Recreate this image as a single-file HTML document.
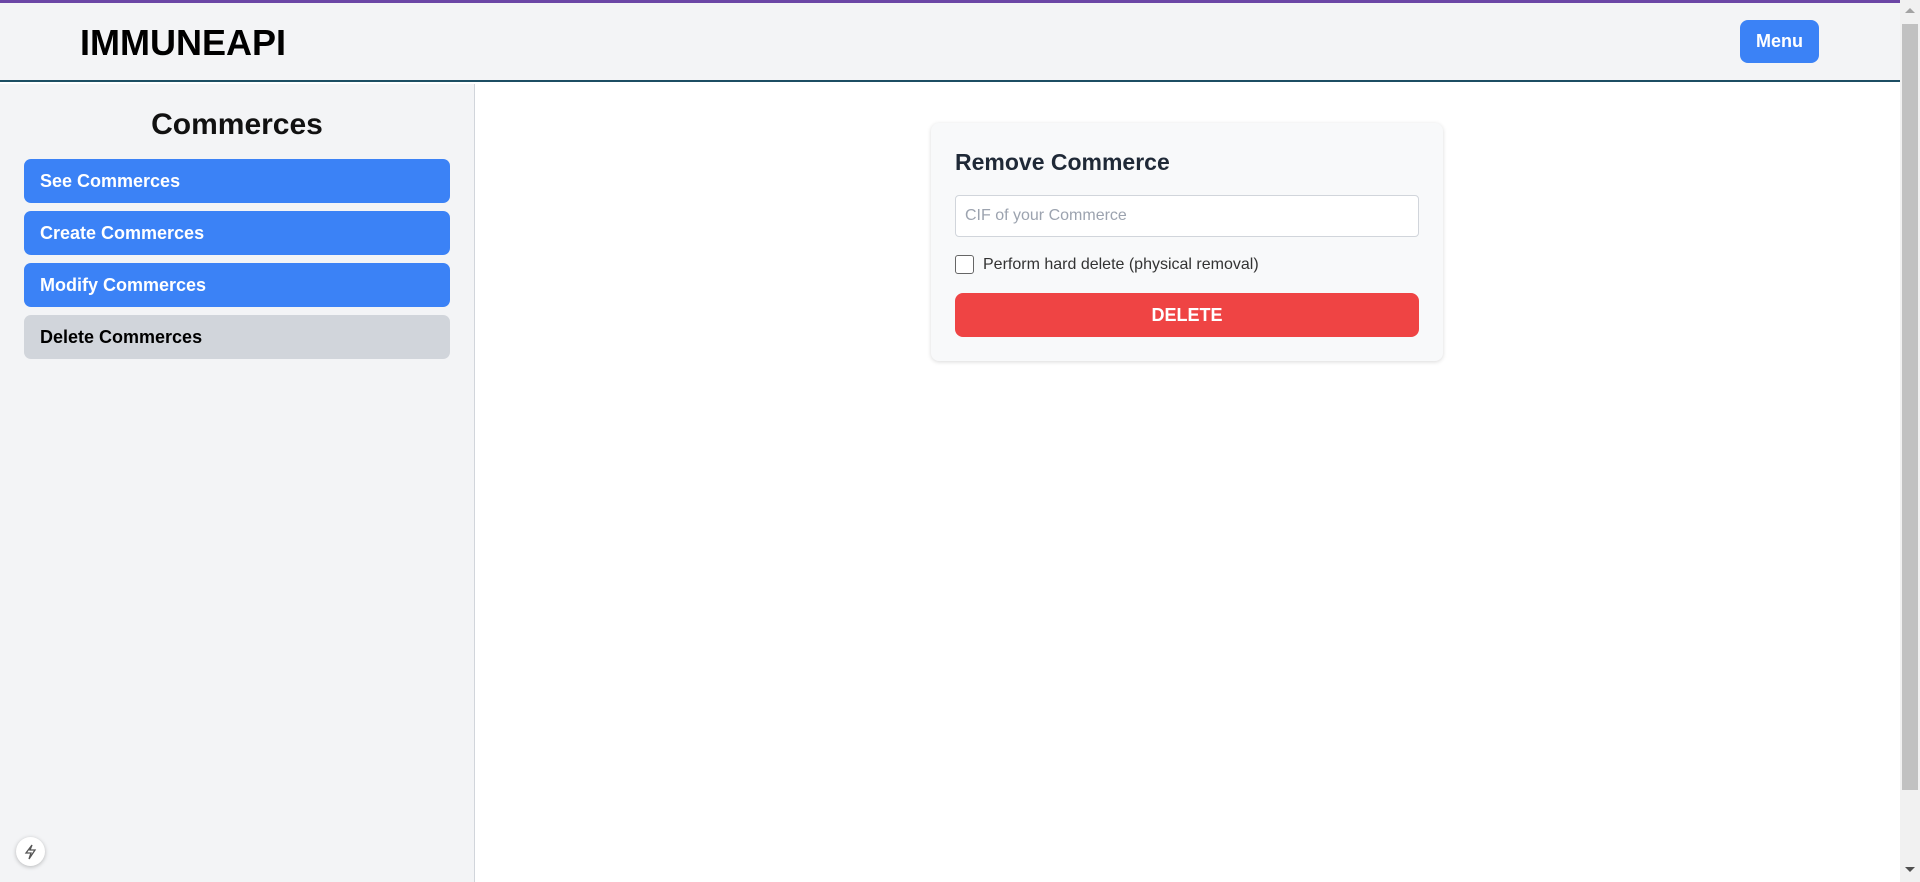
<!DOCTYPE html>
<html><head><meta charset="utf-8"><style>
*{box-sizing:border-box;margin:0;padding:0}
body{width:1920px;height:882px;overflow:hidden;font-family:"Liberation Sans",Arial,sans-serif;background:#fff;position:relative}
.top{position:absolute;left:0;top:0;width:1900px;height:3px;background:#6b46a6}
.hdr{position:absolute;left:0;top:3px;width:1900px;height:79px;background:#f3f4f6;border-bottom:2px solid #1c4e63}
.logo{position:absolute;left:80px;top:19px;font-size:36px;font-weight:bold;color:#000}
.menu{position:absolute;left:1740px;top:17px;width:79px;height:43px;background:#3b82f6;color:#fff;border-radius:8px;font-size:18px;font-weight:bold;text-align:center;line-height:43px}
.side{position:absolute;left:0;top:84px;width:475px;height:798px;background:#f3f4f6;border-right:1px solid #d1d5db}
.side h2{position:absolute;left:0;width:474px;top:24px;text-align:center;font-size:30px;font-weight:bold;color:#111}
.btn{position:absolute;left:24px;width:426px;height:44px;border-radius:7px;background:#3b82f6;color:#fff;font-size:18px;font-weight:bold;padding-left:16px;line-height:44px}
.btn.g{background:#d1d5db;color:#000}
.card{position:absolute;left:931px;top:123px;width:512px;height:238px;background:#f8f9fa;border-radius:8px;box-shadow:0 1px 4px rgba(0,0,0,.15)}
.card h3{position:absolute;left:24px;top:26px;font-size:23px;font-weight:bold;color:#1f2937}
.inp{position:absolute;left:24px;top:72px;width:464px;height:42px;border:1px solid #d1d5db;border-radius:4px;background:#fff;font-size:16px;color:#9ca3af;padding-left:9px;line-height:40px}
.cb{position:absolute;left:24px;top:132px;width:19px;height:19px;border:1px solid #666;border-radius:3px;background:#fff}
.lbl{position:absolute;left:52px;top:133px;font-size:16px;color:#333}
.del{position:absolute;left:24px;top:170px;width:464px;height:44px;border-radius:8px;background:#ef4444;color:#fff;font-size:18px;font-weight:bold;text-align:center;line-height:44px}
.sb{position:absolute;left:1900px;top:0;width:20px;height:882px;background:#f1f1f1}
.th{position:absolute;left:1902px;top:24px;width:16px;height:766px;background:#c1c1c1}
.ic{position:absolute;left:16px;top:837px;width:29px;height:29px;border-radius:50%;background:#fff;box-shadow:0 1px 4px rgba(0,0,0,.25)}
</style></head><body>
<div class="top"></div>
<div class="hdr"><div class="logo">IMMUNEAPI</div><div class="menu">Menu</div></div>
<div class="side"><h2>Commerces</h2>
<div class="btn" style="top:75px">See Commerces</div>
<div class="btn" style="top:127px">Create Commerces</div>
<div class="btn" style="top:179px">Modify Commerces</div>
<div class="btn g" style="top:231px">Delete Commerces</div>
</div>
<div class="card"><h3>Remove Commerce</h3>
<div class="inp">CIF of your Commerce</div>
<div class="cb"></div><div class="lbl">Perform hard delete (physical removal)</div>
<div class="del">DELETE</div></div>
<div class="sb"></div><div class="th"></div>
<svg style="position:absolute;left:1904px;top:6px" width="12" height="8"><path d="M1 7L6 2L11 7Z" fill="#a3a3a3"/></svg>
<svg style="position:absolute;left:1904px;top:866px" width="12" height="8"><path d="M1 1L6 6L11 1Z" fill="#505050"/></svg>
<div class="ic"><svg width="29" height="29"><path d="M16 8L10 16H15L13 22L19 13H14Z" fill="none" stroke="#555" stroke-width="1.3"/></svg></div>
</body></html>
